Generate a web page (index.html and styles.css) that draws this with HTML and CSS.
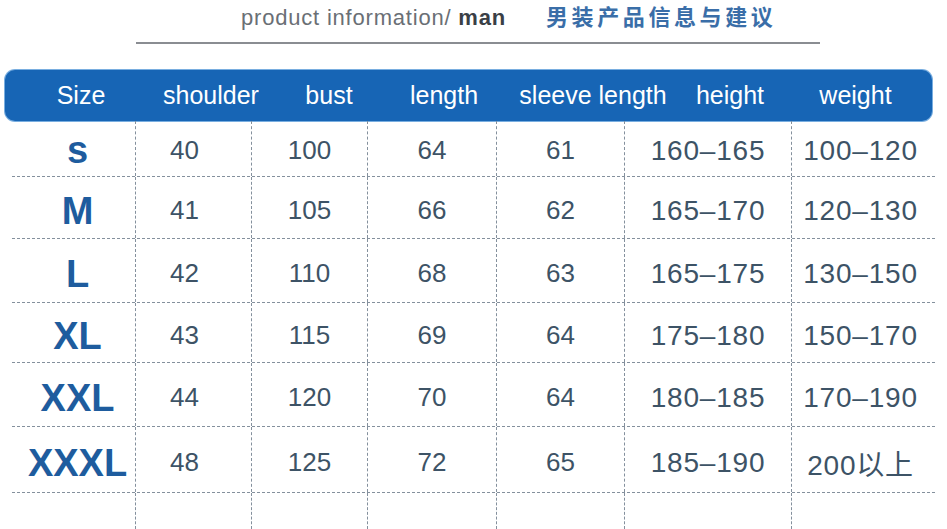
FILE: index.html
```html
<!DOCTYPE html>
<html lang="zh">
<head>
<meta charset="utf-8">
<title>product information / man</title>
<link rel="stylesheet" href="styles.css">
</head>
<body>
<div class="page">
  <div class="title">
    <span class="title-en">product information/ <b>man</b></span>
    <span class="title-cn">男装产品信息与建议</span>
  </div>
  <div class="rule"></div>
  <div class="head">
    <div class="hc">Size</div>
    <div class="hc">shoulder</div>
    <div class="hc">bust</div>
    <div class="hc">length</div>
    <div class="hc">sleeve length</div>
    <div class="hc">height</div>
    <div class="hc hc-last">weight</div>
  </div>
  <div class="grid">
    <div class="row r1">
      <div class="c size">s</div><div class="c sh">40</div><div class="c">100</div><div class="c">64</div><div class="c">61</div><div class="c wide">160–165</div><div class="c wide last">100–120</div>
    </div>
    <div class="row r2">
      <div class="c size">M</div><div class="c sh">41</div><div class="c">105</div><div class="c">66</div><div class="c">62</div><div class="c wide">165–170</div><div class="c wide last">120–130</div>
    </div>
    <div class="row r3">
      <div class="c size">L</div><div class="c sh">42</div><div class="c">110</div><div class="c">68</div><div class="c">63</div><div class="c wide">165–175</div><div class="c wide last">130–150</div>
    </div>
    <div class="row r4">
      <div class="c size">XL</div><div class="c sh">43</div><div class="c">115</div><div class="c">69</div><div class="c">64</div><div class="c wide">175–180</div><div class="c wide last">150–170</div>
    </div>
    <div class="row r5">
      <div class="c size">XXL</div><div class="c sh">44</div><div class="c">120</div><div class="c">70</div><div class="c">64</div><div class="c wide">180–185</div><div class="c wide last">170–190</div>
    </div>
    <div class="row r6">
      <div class="c size">XXXL</div><div class="c sh">48</div><div class="c">125</div><div class="c">72</div><div class="c">65</div><div class="c wide">185–190</div><div class="c wide last cjk">200以上</div>
    </div>
    <div class="row tail">
      <div class="c"></div><div class="c"></div><div class="c"></div><div class="c"></div><div class="c"></div><div class="c"></div><div class="c last"></div>
    </div>
  </div>
</div>
</body>
</html>
```
FILE: styles.css
```css
html, body {
  margin: 0;
  padding: 0;
  background: #ffffff;
}
body {
  font-family: "Liberation Sans", Arial, "Noto Sans CJK SC", sans-serif;
  width: 947px;
  height: 529px;
  overflow: hidden;
}
.title {
  display: flex;
  align-items: baseline;
  padding-left: 241px;
  height: 30px;
  line-height: 30px;
}
.title-en {
  font-size: 22px;
  letter-spacing: 0.8px;
  color: #6a6f75;
}
.title-en b {
  color: #3a3f46;
  font-weight: 700;
}
.title-cn {
  margin-left: 40px;
  font-family: "Noto Sans CJK SC", sans-serif;
  font-size: 22px;
  font-weight: 700;
  letter-spacing: 3.6px;
  color: #3a6ea8;
}
.rule {
  margin: 12px 0 0 136px;
  width: 684px;
  height: 2px;
  background: #8a8d92;
}
.head {
  margin: 26px 0 0 5px;
  width: 927px;
  height: 51px;
  border-radius: 10px;
  background: #1765b5;
  box-shadow: 0 0 0 1px #79aee0;
  display: grid;
  grid-template-columns: 152px 108px 128px 102px 196px 78px 1fr;
  align-items: center;
  color: #ffffff;
  font-size: 25px;
}
.hc {
  text-align: center;
  white-space: nowrap;
}
.hc-last {
  padding-left: 10px;
}
.grid {
  display: flex;
  flex-direction: column;
  margin-left: 12px;
  width: 923px;
}
.row {
  display: grid;
  grid-template-columns: 124px 116px 116px 129px 128px 167px 1fr;
  border-bottom: 1px dashed #84909d;
}
.r1 { height: 55px; }
.r2 { height: 61px; }
.r3 { height: 63px; }
.r4 { height: 59px; }
.r5 { height: 63px; }
.r6 { height: 65px; }
.row.tail {
  height: 36px;
  border-bottom: none;
}
.c {
  display: flex;
  align-items: center;
  justify-content: center;
  padding-top: 6px;
  border-right: 1px dashed #84909d;
  font-size: 26px;
  color: #3d5366;
  white-space: nowrap;
}
.c.last {
  border-right: none;
}
.r1 .c { padding-top: 4px; }
.size {
  font-size: 38px;
  font-weight: 700;
  color: #1e5c9e;
  padding-left: 8px;
  padding-top: 8px;
}
.sh {
  padding-right: 18px;
}
.wide {
  font-size: 28px;
  letter-spacing: 0.8px;
}
.wide.last {
  padding-right: 6px;
}
.cjk {
  font-family: "Liberation Sans", "Noto Sans CJK SC", sans-serif;
}
```
